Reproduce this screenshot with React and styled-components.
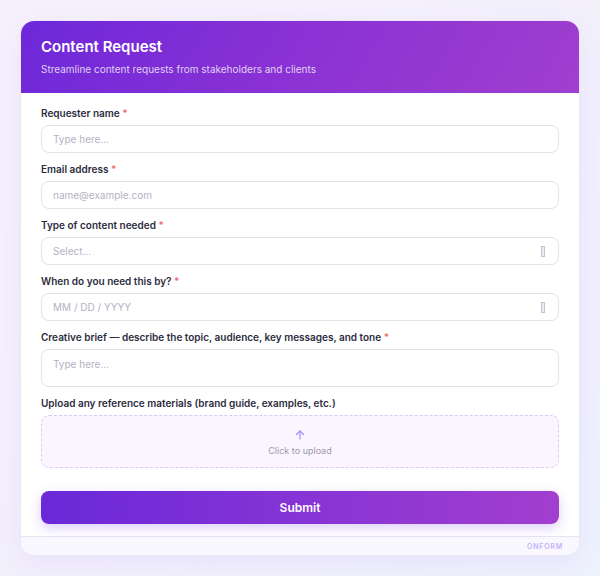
import React from 'react'
import { styled, createGlobalStyle } from 'styled-components'

const Global = createGlobalStyle`
  * { box-sizing: border-box; }
  html, body { margin: 0; padding: 0; }
  body {
    font-family: 'Inter', 'Noto Sans', sans-serif;
    background: linear-gradient(135deg, #f6f1fd 0%, #f3f0fc 50%, #eef2fd 100%);
    min-height: 576px;
  }
`

const Page = styled.div`
  padding: 20px;
`

const Card = styled.div`
  background: #fff;
  border: 1px solid #ece6f7;
  border-radius: 14px;
  overflow: hidden;
  box-shadow: 0 8px 28px rgba(124, 58, 237, 0.08);
`

const Header = styled.div`
  height: 72px;
  padding: 17px 20px 0;
  background: linear-gradient(120deg, #6d28d9 0%, #8b32d4 50%, #a03fcf 100%);
  color: #fff;
  h1 {
    margin: 0;
    font-size: 15px;
    font-weight: 600;
    line-height: 18px;
  }
  p {
    margin: 7px 0 0;
    font-size: 10px;
    line-height: 13px;
    color: rgba(255, 255, 255, 0.78);
  }
`

const Body = styled.div`
  padding: 14px 20px 12px;
  display: flex;
  flex-direction: column;
  gap: 10px;
`

const Field = styled.div`
  display: flex;
  flex-direction: column;
  gap: 5px;
`

const Label = styled.label`
  font-size: 10px;
  font-weight: 600;
  line-height: 13px;
  color: #2c2c3e;
  span { color: #f26b6b; }
`

const Input = styled.div`
  height: ${p => p.$h || 28}px;
  border: 1.5px solid #e2e0ea;
  border-radius: 8px;
  padding: ${p => p.$h ? '8px 11px' : '0 11px'};
  display: flex;
  align-items: ${p => p.$h ? 'flex-start' : 'center'};
  justify-content: space-between;
  font-size: 10px;
  color: #b4b2c2;
`

const Caret = styled.span`
  width: 4px;
  height: 11px;
  border: 1px solid #c4c2ce;
  background: #ecebf1;
  margin-right: 2px;
`

const Upload = styled.div`
  height: 53px;
  padding-top: 13px;
  border: 1.5px dashed #dcc9f8;
  border-radius: 8px;
  background: #faf5ff;
  display: flex;
  flex-direction: column;
  align-items: center;
  gap: 4px;
  font-size: 9px;
  line-height: 11px;
  color: #9d98ad;
  svg { display: block; }
`

const Submit = styled.button`
  margin-top: 13px;
  height: 33px;
  border: none;
  border-radius: 8px;
  background: linear-gradient(90deg, #6a28d8 0%, #8634d5 50%, #a23ecf 100%);
  color: #fff;
  font-family: inherit;
  font-size: 12px;
  font-weight: 600;
  box-shadow: 0 4px 12px rgba(139, 92, 246, 0.3);
`

const Footer = styled.div`
  height: 19px;
  border-top: 1px solid #e8e4f2;
  background: #faf8ff;
  display: flex;
  align-items: center;
  justify-content: flex-end;
  padding-right: 16px;
  font-size: 7px;
  font-weight: 600;
  letter-spacing: 0.8px;
  color: #c4b3fa;
`

const fields = [
  { label: 'Requester name', ph: 'Type here...' },
  { label: 'Email address', ph: 'name@example.com' },
  { label: 'Type of content needed', ph: 'Select...', caret: true },
  { label: 'When do you need this by?', ph: 'MM / DD / YYYY', caret: true },
  { label: 'Creative brief — describe the topic, audience, key messages, and tone', ph: 'Type here...', h: 38 },
]

const App = () => (
  <>
    <Global />
    <Page>
      <Card>
        <Header>
          <h1>Content Request</h1>
          <p>Streamline content requests from stakeholders and clients</p>
        </Header>
        <Body>
          {fields.map(f => (
            <Field key={f.label}>
              <Label>{f.label} <span>*</span></Label>
              <Input $h={f.h}>
                {f.ph}
                {f.caret && <Caret />}
              </Input>
            </Field>
          ))}
          <Field>
            <Label>Upload any reference materials (brand guide, examples, etc.)</Label>
            <Upload>
              <svg width="12" height="12" viewBox="0 0 24 24" fill="none" stroke="#a78bfa" strokeWidth="2.4" strokeLinecap="round" strokeLinejoin="round">
                <path d="M12 20V4" />
                <path d="M5 11l7-7 7 7" />
              </svg>
              Click to upload
            </Upload>
          </Field>
          <Submit>Submit</Submit>
        </Body>
        <Footer>ONFORM</Footer>
      </Card>
    </Page>
  </>
)

export default App
